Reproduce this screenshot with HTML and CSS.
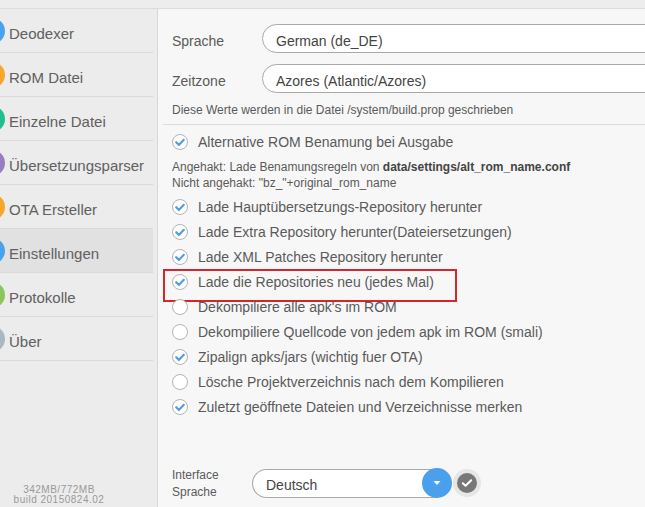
FILE: index.html
```html
<!DOCTYPE html>
<html lang="de">
<head>
  <meta charset="UTF-8" />
  <title>Einstellungen</title>
  <link rel="stylesheet" href="styles.css">
</head>
<body>
  <div class="topbar"></div>
  <div class="layout">
    <aside class="sidebar">
      <div class="nav-item"><span class="dot blue"></span><span class="label">Deodexer</span></div>
      <div class="nav-item"><span class="dot orange"></span><span class="label">ROM Datei</span></div>
      <div class="nav-item"><span class="dot teal"></span><span class="label">Einzelne Datei</span></div>
      <div class="nav-item"><span class="dot purple"></span><span class="label">Übersetzungsparser</span></div>
      <div class="nav-item"><span class="dot orange"></span><span class="label">OTA Ersteller</span></div>
      <div class="nav-item active"><span class="dot blue"></span><span class="label">Einstellungen</span></div>
      <div class="nav-item"><span class="dot green"></span><span class="label">Protokolle</span></div>
      <div class="nav-item"><span class="dot grey"></span><span class="label">Über</span></div>
      <div class="footer">342MB/772MB<br>build 20150824.02</div>
    </aside>

    <main class="main">
      <div class="field">
        <label>Sprache</label>
        <div class="input">German (de_DE)</div>
      </div>
      <div class="field second">
        <label>Zeitzone</label>
        <div class="input">Azores (Atlantic/Azores)</div>
      </div>
      <div class="note">Diese Werte werden in die Datei /system/build.prop geschrieben</div>
      <div class="divider"></div>

      <div class="check-row first" data-checked="1">Alternative ROM Benamung bei Ausgabe</div>
      <div class="help">
        Angehakt: Lade Benamungsregeln von <b>data/settings/alt_rom_name.conf</b><br>
        Nicht angehakt: "bz_"+original_rom_name
      </div>
      <div class="check-row" data-checked="1">Lade Hauptübersetzungs-Repository herunter</div>
      <div class="check-row" data-checked="1">Lade Extra Repository herunter(Dateiersetzungen)</div>
      <div class="check-row" data-checked="1">Lade XML Patches Repository herunter</div>
      <div class="check-row marked" data-checked="1">Lade die Repositories neu (jedes Mal)</div>
      <div class="check-row">Dekompiliere alle apk's im ROM</div>
      <div class="check-row">Dekompiliere Quellcode von jedem apk im ROM (smali)</div>
      <div class="check-row" data-checked="1">Zipalign apks/jars (wichtig fuer OTA)</div>
      <div class="check-row">Lösche Projektverzeichnis nach dem Kompilieren</div>
      <div class="check-row" data-checked="1">Zuletzt geöffnete Dateien und Verzeichnisse merken</div>

      <div class="lang-row">
        <label>Interface<br>Sprache</label>
        <div class="select">Deutsch</div>
        <span class="drop-btn">
          <svg width="10" height="6" viewBox="0 0 10 6"><path d="M1.5 1 L8.5 1 L5 5 Z" fill="#fff"/></svg>
        </span>
        <span class="ok-btn">
          <span class="ok-inner">
            <svg width="12" height="10" viewBox="0 0 12 10"><path d="M1.8 5.2 L4.6 7.8 L10.2 2.2" fill="none" stroke="#fff" stroke-width="2" stroke-linecap="round" stroke-linejoin="round"/></svg>
          </span>
        </span>
      </div>
    </main>
  </div>

  <script>
    const on = '<svg width="16" height="16" viewBox="0 0 16 16"><circle cx="8" cy="8" r="7.5" fill="#fff" stroke="#b3b3b3"/><path d="M4.2 8.2 L7 10.9 L11.8 5.8" fill="none" stroke="#4a9de6" stroke-width="2.1" stroke-linecap="round" stroke-linejoin="round"/></svg>';
    const off = '<svg width="16" height="16" viewBox="0 0 16 16"><circle cx="8" cy="8" r="7.5" fill="#fff" stroke="#b3b3b3"/></svg>';
    document.querySelectorAll(".check-row").forEach(row => {
      const box = document.createElement("span");
      box.className = "box";
      box.innerHTML = row.dataset.checked ? on : off;
      row.prepend(box);
    });
  </script>
</body>
</html>
```

FILE: styles.css
```css
* {
  box-sizing: border-box;
}

body {
  margin: 0;
  width: 645px;
  height: 507px;
  overflow: hidden;
  font-family: 'Liberation Sans', Arial, sans-serif;
  background: #f7f7f7;
  color: #5a5a5a;
}

.topbar {
  height: 9px;
  background: #ededed;
  border-bottom: 1px solid #dcdcdc;
}

.layout {
  display: flex;
  height: 498px;
}

/* sidebar */

.sidebar {
  width: 158px;
  flex-shrink: 0;
  background: #ececec;
  border-right: 1px solid #d8d8d8;
  display: flex;
  flex-direction: column;
  overflow: hidden;
}

.nav-item {
  width: 153px;
  height: 44px;
  border-bottom: 1px solid #dadada;
  display: flex;
  align-items: center;
  font-size: 15px;
  color: #606060;
}

.nav-item .label {
  padding-top: 5px;
}

.nav-item.active {
  background: #e1e1e1;
}

.dot {
  width: 26px;
  height: 26px;
  border-radius: 50%;
  margin-left: -21px;
  margin-right: 4px;
  flex-shrink: 0;
}

.dot.blue { background: #4aa2ee; }
.dot.orange { background: #f8a72c; }
.dot.teal { background: #1fbf8f; }
.dot.purple { background: #9a7dc1; }
.dot.green { background: #8cc65a; }
.dot.grey { background: #aab8c3; }

.footer {
  margin-top: auto;
  width: 118px;
  text-align: center;
  font-size: 10px;
  line-height: 10px;
  letter-spacing: 0.5px;
  color: #999;
  padding-bottom: 2px;
}

/* main */

.main {
  flex: 1;
  overflow: hidden;
  display: flex;
  flex-direction: column;
  padding-top: 15px;
}

.field {
  display: flex;
  align-items: center;
  padding-left: 14px;
}

.field.second {
  margin-top: 11px;
}

.field label {
  width: 90px;
  flex-shrink: 0;
  font-size: 14px;
  padding-top: 4px;
}

.input {
  width: 420px;
  height: 29px;
  flex-shrink: 0;
  background: #fff;
  border: 1px solid #a9a9a9;
  border-radius: 15px 0 0 15px;
  padding: 4px 0 0 13px;
  display: flex;
  align-items: center;
  font-size: 14px;
  color: #444;
}

.note {
  margin-top: 9px;
  padding-left: 14px;
  font-size: 12px;
  line-height: 16px;
}

.divider {
  margin-top: 6px;
  margin-left: 5px;
  height: 1px;
  background: #dcdcdc;
}

.check-row {
  height: 25px;
  display: flex;
  align-items: center;
  gap: 10px;
  padding-left: 14px;
  font-size: 14px;
  white-space: nowrap;
  position: relative;
}

.check-row.first {
  margin-top: 4px;
}

.box {
  display: flex;
  width: 16px;
  height: 16px;
}

.check-row.marked::after {
  content: "";
  position: absolute;
  left: 5px;
  top: 0;
  width: 290px;
  height: 29px;
  border: 2px solid #d5262b;
}

.help {
  margin: 5px 0 3px;
  padding-left: 14px;
  font-size: 12px;
  line-height: 16px;
  white-space: nowrap;
}

.help b {
  color: #444;
}

/* interface language */

.lang-row {
  margin-top: auto;
  margin-bottom: 9px;
  height: 30px;
  display: flex;
  align-items: center;
  padding-left: 14px;
}

.lang-row label {
  width: 80px;
  flex-shrink: 0;
  font-size: 12px;
  line-height: 17px;
  padding-top: 1px;
}

.select {
  width: 185px;
  height: 29px;
  background: #fff;
  border: 1px solid #a9a9a9;
  border-right: none;
  border-radius: 15px 0 0 15px;
  padding: 4px 0 0 13px;
  display: flex;
  align-items: center;
  font-size: 14px;
  color: #444;
}

.drop-btn {
  width: 30px;
  height: 30px;
  margin-left: -15px;
  border-radius: 50%;
  background: #4aa0ec;
  display: flex;
  align-items: center;
  justify-content: center;
}

.ok-btn {
  width: 28px;
  height: 28px;
  margin-left: 1px;
  border-radius: 50%;
  background: #e6e6e6;
  display: flex;
  align-items: center;
  justify-content: center;
}

.ok-inner {
  width: 20px;
  height: 20px;
  border-radius: 50%;
  background: #777;
  display: flex;
  align-items: center;
  justify-content: center;
}
```
